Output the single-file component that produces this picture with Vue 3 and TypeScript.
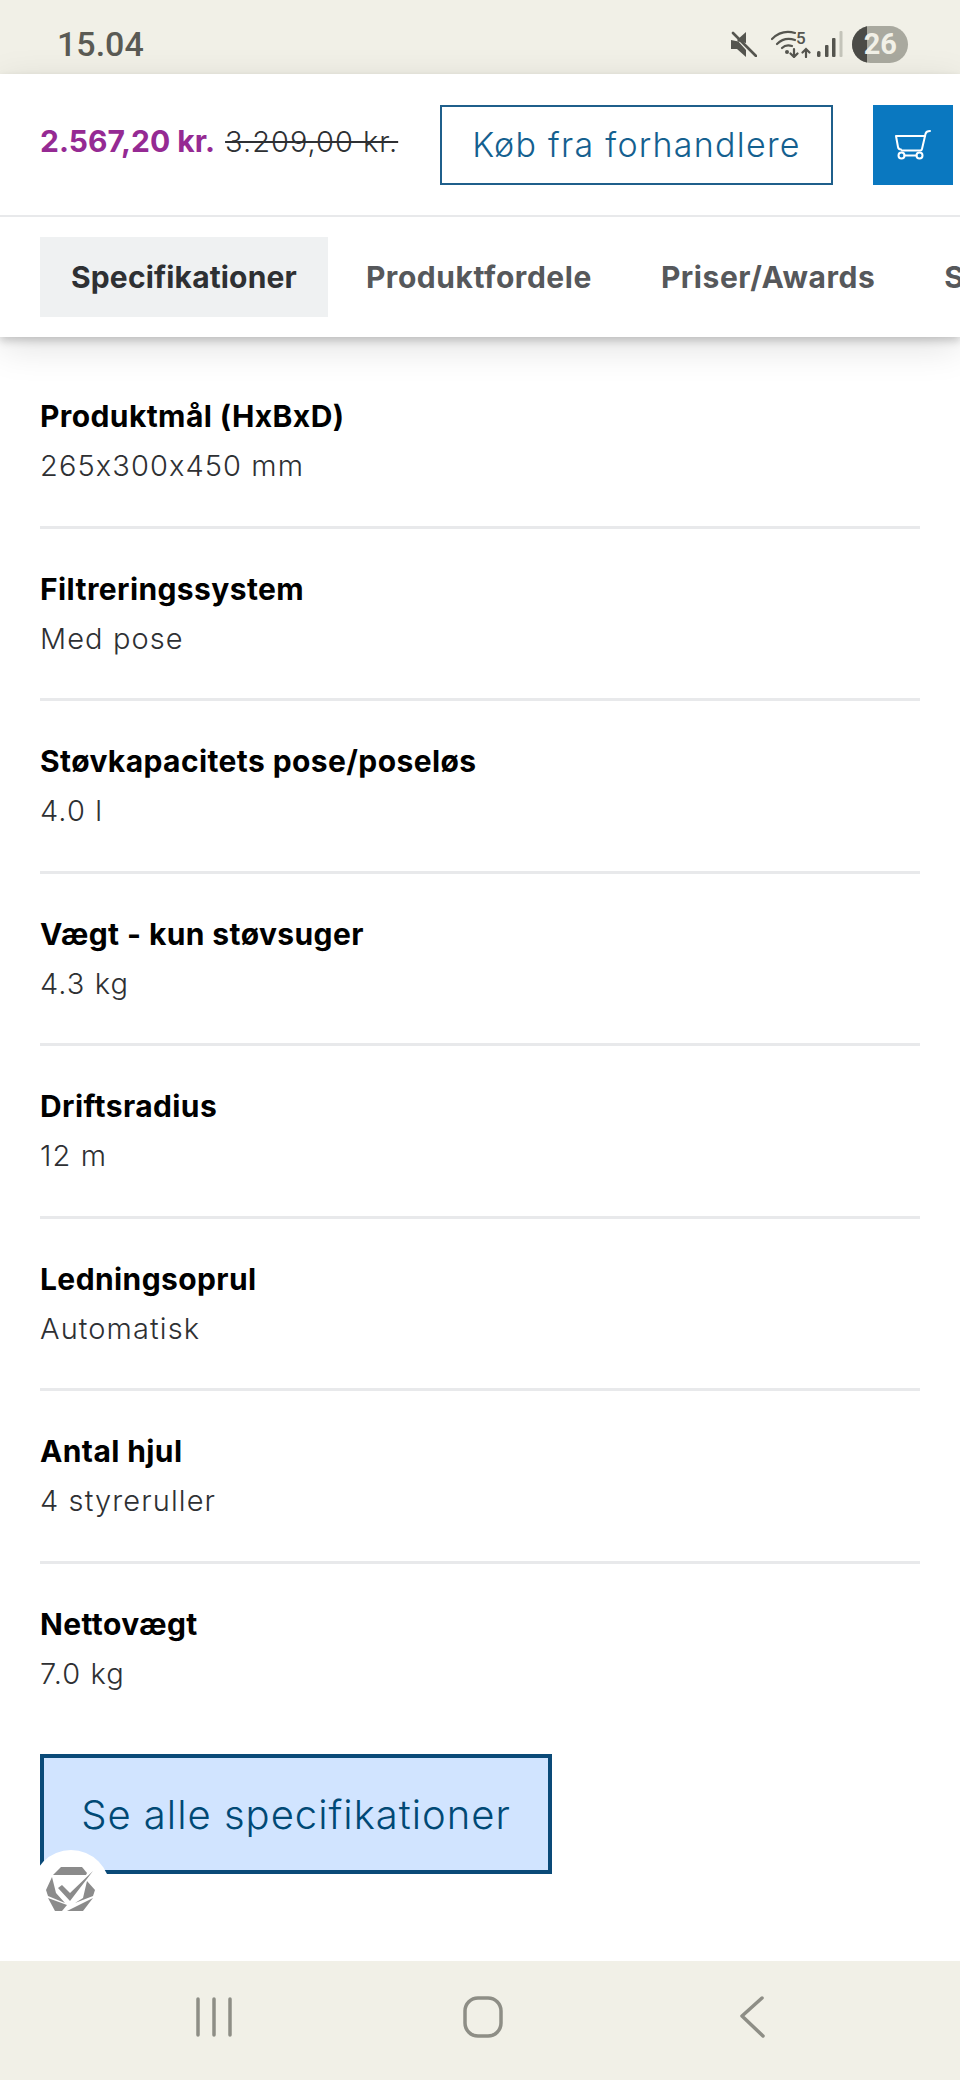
<template>
  <div class="page">
    <div class="status-bar">
      <span class="clock">15.04</span>
      <div class="status-icons">
        <svg class="ic-mute" width="26" height="26" viewBox="0 0 26 26">
          <path d="M0 9h6l9-8v11zM0 9v9h6l9 8v-7L6 9z" fill="#55554f" />
          <path d="M2 2l23 23" stroke="#55554f" stroke-width="2.600" stroke-linecap="round" />
        </svg>
        <svg class="ic-wifi" width="40" height="28" viewBox="0 0 40 28">
          <g fill="none" stroke="#55554f" stroke-width="2.200" stroke-linecap="round">
            <path d="M1 9C8 2 17 1 24 3" />
            <path d="M6 14c5-5 12-6 18-4" />
            <path d="M11 18c3-3 7-3 10-2" />
            <path d="M23 19v8M19.500 23.500l3.500 3.500 3.500-3.500" />
            <path d="M35 27v-8M31.500 22.500l3.500-3.500 3.500 3.500" />
          </g>
          <circle cx="16" cy="22" r="2" fill="#55554f" />
          <text x="25" y="14" class="wifi-num">5</text>
        </svg>
        <svg class="ic-signal" width="26" height="28" viewBox="0 0 26 28">
          <rect x="0" y="21" width="3.500" height="6" rx="1.500" fill="#55554f" />
          <rect x="8" y="15" width="3.500" height="12" rx="1" fill="#55554f" />
          <rect x="15" y="8" width="3.500" height="19" rx="1" fill="#55554f" />
          <rect x="22.500" y="1" width="3" height="26" rx="1" fill="#c4c4ba" />
        </svg>
        <div class="battery"><span class="battery-fill"></span><span class="battery-num">26</span></div>
      </div>
    </div>

    <header class="head">
      <div class="buy-row">
        <div class="prices">
          <span class="price-now">2.567,20 kr.</span>
          <span class="price-old">3.209,00 kr.</span>
        </div>
        <button class="dealer-btn">Køb fra forhandlere</button>
        <button class="cart-btn" aria-label="Kurv">
          <svg width="36" height="30" viewBox="0 0 36 30" fill="none" stroke="#fff" stroke-width="2" stroke-linecap="round" stroke-linejoin="round">
            <path d="M35 1c-2.500 0-3.800.6-4.400 2.600L27 19c-.2 1-.8 1.500-1.800 1.500H7" />
            <path d="M1 6h29M1 6l2 11c.3 1.700 1.200 2.500 3 2.500" />
            <circle cx="6.500" cy="25.500" r="3" />
            <circle cx="24.500" cy="25.500" r="3" />
            <path d="M9.500 25.500h12" />
          </svg>
        </button>
      </div>
      <nav class="tabs">
        <a
          v-for="tab in tabs"
          :key="tab"
          class="tab"
          :class="{ active: tab === activeTab }"
        >{{ tab }}</a>
      </nav>
    </header>

    <main class="content">
      <section class="spec-list">
        <div v-for="spec in specs" :key="spec.label" class="spec">
          <div class="spec-label">{{ spec.label }}</div>
          <div class="spec-value">{{ spec.value }}</div>
        </div>
      </section>
      <div class="more">
        <button class="more-btn">Se alle specifikationer</button>
        <div class="badge">
          <svg width="50" height="45" viewBox="0 0 50 45" fill="#8b8b8b">
            <path d="M7 8l8-8h21l5 6-1 2z" />
            <path d="M6 10L0 23l2 6 17 7-9-10z" />
            <path d="M41 14l8 9-2 6-18 7 8-5z" />
            <path d="M2 31l19 7-5 6H9z" />
            <path d="M47 31l-26 13h16z" />
            <path d="M12 21l4-3 8 8L47 4 24 34z" />
          </svg>
        </div>
      </div>
    </main>

    <footer class="nav-bar">
      <svg width="38" height="40" viewBox="0 0 38 40" stroke="#8e8e86" stroke-width="3.500" stroke-linecap="round">
        <path d="M3 2v36M19 2v36M35 2v36" />
      </svg>
      <svg width="40" height="42" viewBox="0 0 40 42" fill="none" stroke="#8e8e86" stroke-width="3.500">
        <rect x="2" y="2" width="36" height="38" rx="13" />
      </svg>
      <svg width="26" height="42" viewBox="0 0 26 42" fill="none" stroke="#8e8e86" stroke-width="3.500" stroke-linecap="round" stroke-linejoin="round">
        <path d="M23 2L3 20l21 20" />
      </svg>
    </footer>
  </div>
</template>

<script setup lang="ts">
const activeTab = "Specifikationer";
const tabs = [activeTab, "Produktfordele", "Priser/Awards", "Service"];

const specs = [
  { label: "Produktmål (HxBxD)", value: "265x300x450 mm" },
  { label: "Filtreringssystem", value: "Med pose" },
  { label: "Støvkapacitets pose/poseløs", value: "4.0 l" },
  { label: "Vægt - kun støvsuger", value: "4.3 kg" },
  { label: "Driftsradius", value: "12 m" },
  { label: "Ledningsoprul", value: "Automatisk" },
  { label: "Antal hjul", value: "4 styreruller" },
  { label: "Nettovægt", value: "7.0 kg" },
];
</script>

<style>
html,
body {
  background: #fff;
}
</style>

<style scoped>
.page {
  width: 960px;
  height: 2080px;
  display: flex;
  flex-direction: column;
  overflow: hidden;
  font-family: Inter, "Liberation Sans", sans-serif;
  font-feature-settings: "calt" 0;
  color: #000;
}

.status-bar {
  height: 74px;
  flex: none;
  display: flex;
  align-items: center;
  justify-content: space-between;
  padding: 14px 52px 0 57px;
  background: #f1f0e7;
  box-sizing: border-box;
}

.clock {
  font-family: Roboto, sans-serif;
  font-size: 34px;
  font-weight: 500;
  color: #5a5a54;
}

.status-icons {
  display: flex;
  align-items: center;
}

.ic-mute {
  margin-right: 14px;
}

.ic-wifi {
  margin-right: 6px;
}

.ic-signal {
  margin-right: 9px;
}

.wifi-num {
  font-family: Roboto, sans-serif;
  font-size: 17px;
  font-weight: 500;
  fill: #55554f;
}

.battery {
  position: relative;
  width: 56px;
  height: 37px;
  border-radius: 19px;
  background: #a9a99f;
  overflow: hidden;
  display: flex;
  align-items: center;
  justify-content: flex-end;
  padding-right: 11px;
  box-sizing: border-box;
}

.battery-fill {
  position: absolute;
  left: 0;
  top: 0;
  bottom: 0;
  width: 15px;
  background: #4b4b47;
}

.battery-num {
  position: relative;
  font-family: Roboto, sans-serif;
  font-size: 29px;
  font-weight: 700;
  color: #f1f0e7;
}

.head {
  position: relative;
  flex: none;
  background: #fff;
  box-shadow: 0 4px 8px rgba(0, 0, 0, 0.18), 0 10px 36px rgba(0, 0, 0, 0.12);
  z-index: 2;
}

.buy-row {
  height: 141px;
  display: flex;
  align-items: center;
  padding: 0 7px 0 40px;
  border-bottom: 2px solid #e8e9eb;
}

.prices {
  width: 400px;
  flex: none;
  padding-bottom: 8px;
  white-space: nowrap;
}

.price-now {
  font-size: 30px;
  font-weight: 700;
  color: #952a93;
}

.price-old {
  margin-left: 10px;
  font-size: 29px;
  font-weight: 300;
  letter-spacing: 1px;
  color: #2e3033;
  text-decoration: line-through;
}

.dealer-btn {
  width: 393px;
  height: 80px;
  flex: none;
  border: 2px solid #1f5f8b;
  background: #fff;
  color: #14608f;
  font: inherit;
  font-size: 34px;
  font-weight: 300;
  letter-spacing: 1.25px;
  padding: 0;
}

.cart-btn {
  width: 80px;
  height: 80px;
  flex: none;
  margin-left: 40px;
  border: 0;
  background: #0a78c0;
  display: flex;
  align-items: center;
  justify-content: center;
  padding: 0;
}

.tabs {
  height: 120px;
  display: flex;
  align-items: center;
  gap: 7px;
  padding-left: 40px;
  white-space: nowrap;
}

.tab {
  height: 80px;
  display: flex;
  align-items: center;
  flex: none;
  padding: 0 31px;
  font-size: 30px;
  font-weight: 700;
  letter-spacing: 0.55px;
  color: #56585b;
}

.tab.active {
  background: #eff1f2;
  color: #2e3033;
  letter-spacing: 0.15px;
}

.content {
  flex: 1;
  padding: 19px 40px 0;
}

.spec {
  padding: 40px 0 39.5px;
  border-bottom: 3px solid #e8e9eb;
}

.spec:last-child {
  border-bottom: 0;
}

.spec-label {
  font-size: 30px;
  line-height: 40px;
  font-weight: 700;
  letter-spacing: 0.4px;
}

.spec-value {
  margin-top: 10px;
  font-size: 29px;
  line-height: 40px;
  font-weight: 300;
  letter-spacing: 1.1px;
  color: #2e3033;
}

.more {
  position: relative;
  margin-top: 21px;
}

.more-btn {
  width: 512px;
  height: 120px;
  border: 4px solid #0a4a78;
  background: #d1e4ff;
  color: #004975;
  font: inherit;
  font-size: 40px;
  font-weight: 300;
  letter-spacing: 1px;
  padding: 0;
}

.badge {
  position: absolute;
  left: -8px;
  top: 96px;
  width: 78px;
  height: 78px;
  border-radius: 50%;
  background: #fff;
  display: flex;
  align-items: center;
  justify-content: center;
}

.nav-bar {
  height: 119px;
  flex: none;
  display: grid;
  grid-template-columns: repeat(3, 1fr);
  align-items: center;
  justify-items: center;
  background: #f1f0e7;
  padding: 0 74px 8px 79px;
  box-sizing: border-box;
}
</style>
